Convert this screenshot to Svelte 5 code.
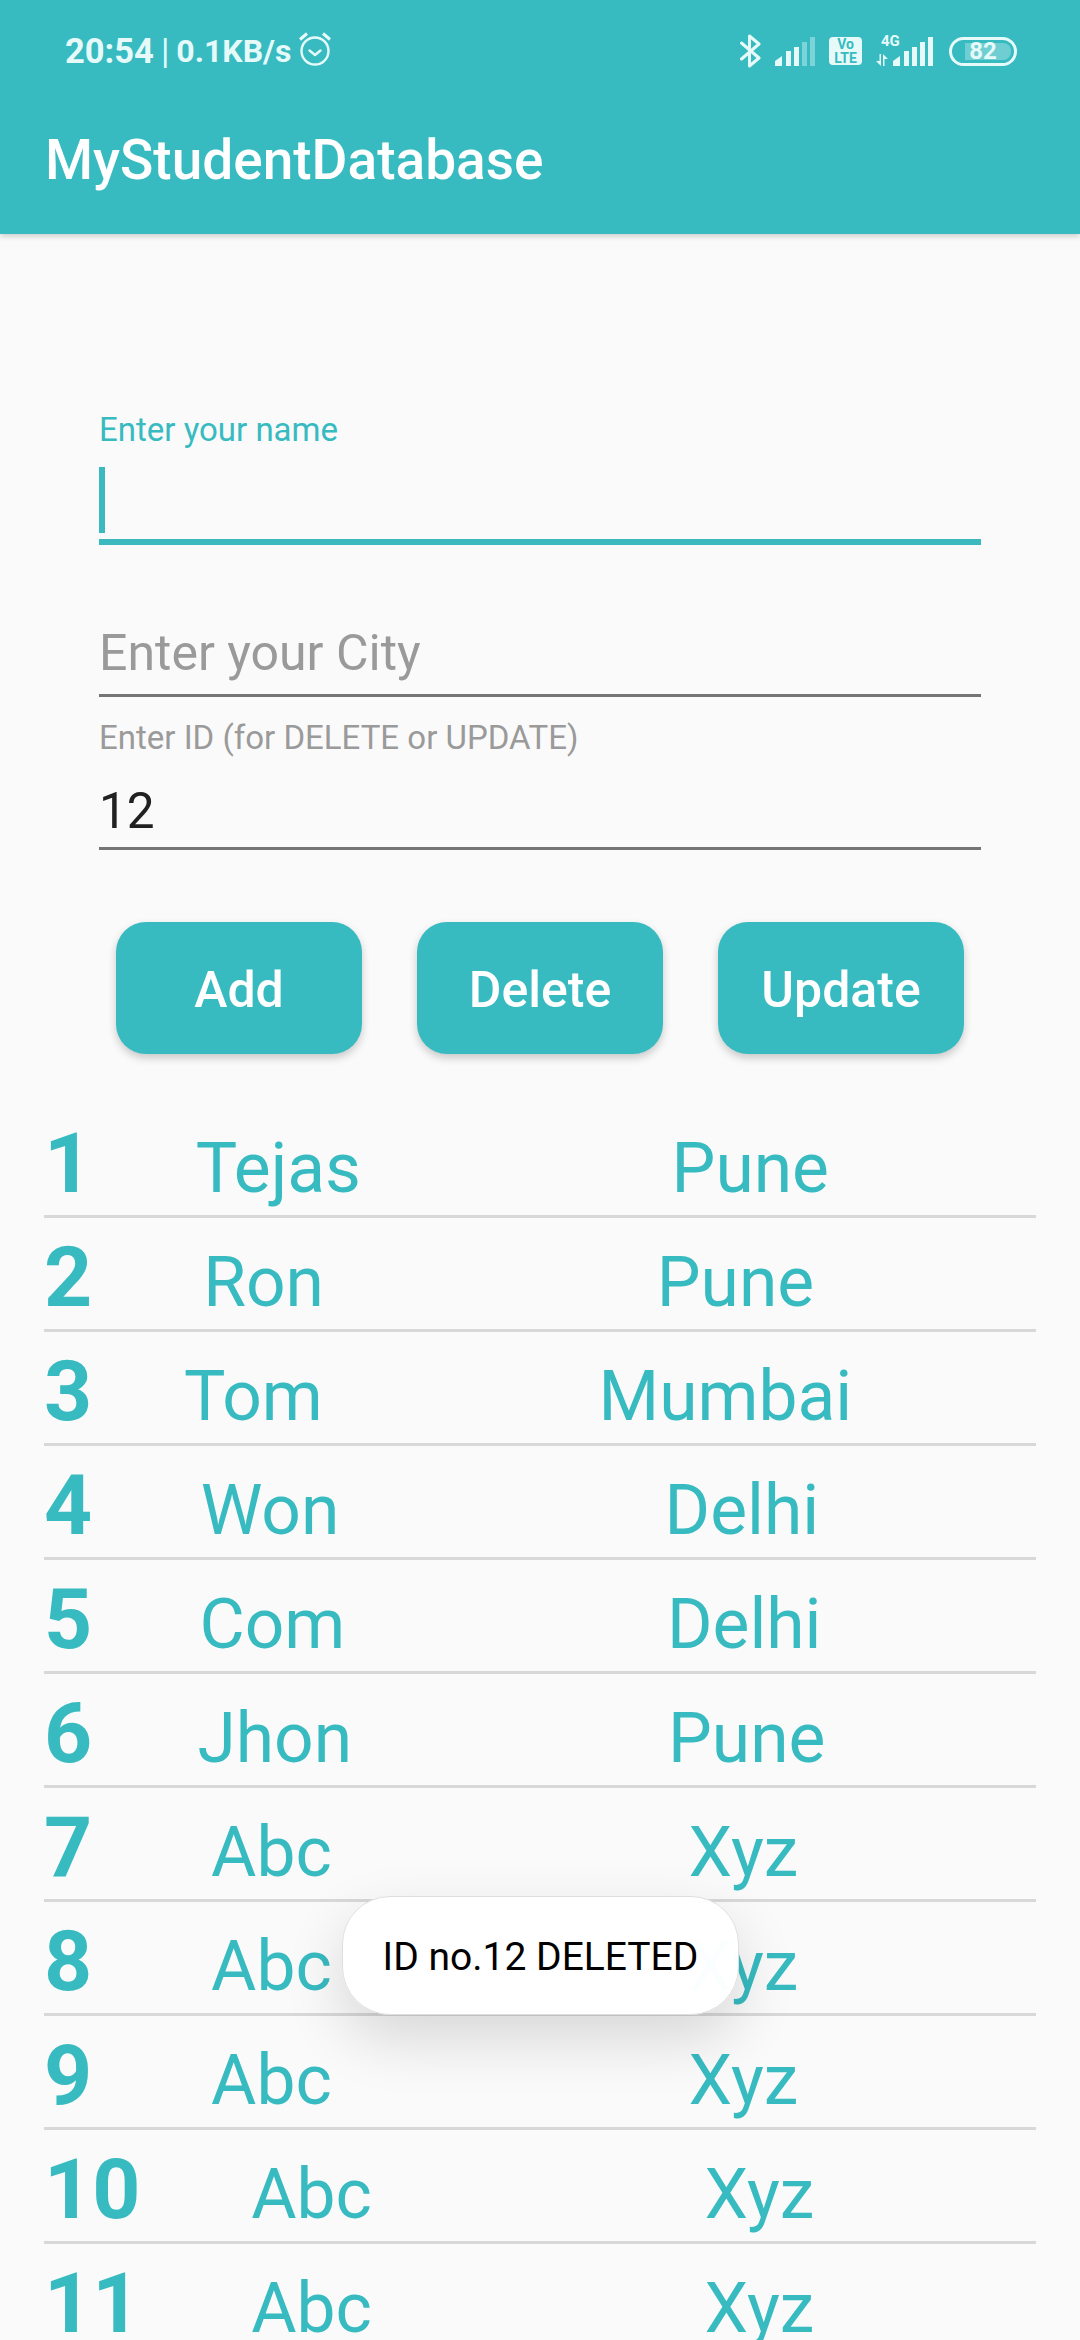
<script>
  const students = [
    { id: 1, name: 'Tejas', city: 'Pune' },
    { id: 2, name: 'Ron', city: 'Pune' },
    { id: 3, name: 'Tom', city: 'Mumbai' },
    { id: 4, name: 'Won', city: 'Delhi' },
    { id: 5, name: 'Com', city: 'Delhi' },
    { id: 6, name: 'Jhon', city: 'Pune' },
    { id: 7, name: 'Abc', city: 'Xyz' },
    { id: 8, name: 'Abc', city: 'Xyz' },
    { id: 9, name: 'Abc', city: 'Xyz' },
    { id: 10, name: 'Abc', city: 'Xyz' },
    { id: 11, name: 'Abc', city: 'Xyz' }
  ];
</script>

<div class="screen">
  <header class="appbar">
    <div class="status">
      <div class="status-left">
        <span class="time">20:54</span>
        <span class="sep">|</span>
        <span class="speed">0.1KB/s</span>
        <svg class="alarm" width="34" height="36" viewBox="0 0 34 36" fill="none" stroke="#e6fafa" stroke-width="2.4">
          <circle cx="17" cy="20" r="13.5" />
          <path d="M11.5 19.5 L17 24 L22.5 19.5" stroke-linecap="round" stroke-linejoin="round" />
          <path d="M2 8.5 L9 2.5 M32 8.5 L25 2.5" stroke-width="3" />
        </svg>
      </div>
      <div class="status-right">
        <svg width="21" height="34" viewBox="0 0 21 34" fill="none" stroke="#e6fafa" stroke-width="3" stroke-linejoin="round" stroke-linecap="round">
          <path d="M1.5 9 L19 24 L9.5 32 V2 L19 10 L1.5 25" />
        </svg>
        <svg class="bars" width="40" height="29" viewBox="0 0 40 29" fill="#e6fafa">
          <path d="M0 29 V24 L7 19 V29 Z" />
          <rect x="11" y="14" width="5" height="15" />
          <rect x="19" y="10" width="5" height="19" />
          <rect x="27" y="5" width="5" height="24" opacity="0.4" />
          <rect x="35" y="0" width="5" height="29" opacity="0.4" />
        </svg>
        <div class="volte"><span>Vo</span><span>LTE</span></div>
        <div class="net">
          <span class="fourg">4G</span>
          <svg width="12" height="12" viewBox="0 0 12 12" fill="#e6fafa">
            <path d="M3.5 0 H5 V12 L0 7 H3.5 Z M7 0 L12 5 H8.5 V12 H7 Z" />
          </svg>
        </div>
        <svg class="bars2" width="40" height="29" viewBox="0 0 40 29" fill="#e6fafa">
          <path d="M0 29 V24 L7 19 V29 Z" />
          <rect x="11" y="14" width="5" height="15" />
          <rect x="19" y="10" width="5" height="19" />
          <rect x="27" y="5" width="5" height="24" />
          <rect x="35" y="0" width="5" height="29" />
        </svg>
        <div class="battery"><div class="battery-fill"></div><span>82</span></div>
      </div>
    </div>
    <h1>MyStudentDatabase</h1>
  </header>

  <section class="form">
    <label class="label-focus" for="name">Enter your name</label>
    <div class="name-field" id="name"><span class="caret"></span></div>
    <input class="text city" type="text" placeholder="Enter your City" />
    <label class="label-id" for="sid">Enter ID (for DELETE or UPDATE)</label>
    <input class="text sid" id="sid" type="text" value="12" />
  </section>

  <div class="buttons">
    <button>Add</button>
    <button>Delete</button>
    <button>Update</button>
  </div>

  <div class="list">
    {#each students as s (s.id)}
      <div class="row">
        <span class="num">{s.id}</span>
        <span class="name">{s.name}</span>
        <span class="cityname">{s.city}</span>
      </div>
    {/each}
  </div>

  <div class="toast">ID no.12 DELETED</div>
</div>

<style>
  :global(body) {
    margin: 0;
    background: #fafafa;
  }

  .screen {
    position: relative;
    width: 1080px;
    height: 2340px;
    overflow: hidden;
    background: #fafafa;
    font-family: Roboto, sans-serif;
  }

  .appbar {
    height: 234px;
    box-sizing: border-box;
    background: #37bbc1;
    padding: 30px 0 0 45px;
    box-shadow: 0 2px 6px rgba(0, 0, 0, 0.2);
  }

  .status {
    display: flex;
    justify-content: space-between;
    align-items: center;
    height: 42px;
    padding: 0 63px 0 20px;
    color: #e6fafa;
  }

  .status-left {
    display: flex;
    align-items: center;
    gap: 7px;
    font-size: 34.5px;
    font-weight: 700;
  }

  .sep {
    font-weight: 400;
  }

  .speed {
    font-size: 32px;
  }

  .alarm {
    margin-top: -4px;
  }

  .status-right {
    display: flex;
    align-items: center;
    height: 36px;
  }

  .bars {
    margin-left: 14px;
  }

  .volte {
    margin-left: 14px;
    width: 33px;
    height: 28px;
    border-radius: 4px;
    background: #e6fafa;
    color: #37bbc1;
    display: flex;
    flex-direction: column;
    align-items: center;
    font-size: 14px;
    font-weight: 700;
    line-height: 14px;
  }

  .net {
    margin-left: 14px;
    width: 26px;
    height: 30px;
    display: flex;
    flex-direction: column;
    justify-content: space-between;
    align-items: flex-start;
  }

  .fourg {
    font-size: 15px;
    font-weight: 700;
    line-height: 11px;
    margin-left: 5px;
  }

  .bars2 {
    margin-left: -9px;
  }

  .battery {
    position: relative;
    margin-left: 16px;
    width: 68px;
    height: 29px;
    box-sizing: border-box;
    border: 3px solid #e6fafa;
    border-radius: 15px;
    display: flex;
    align-items: center;
    justify-content: center;
    font-size: 24px;
    font-weight: 700;
    color: #e6fafa;
  }

  .battery span {
    position: relative;
  }

  .battery-fill {
    position: absolute;
    left: 13px;
    top: 3px;
    bottom: 3px;
    right: 3px;
    border-radius: 0 8px 8px 0;
    background: rgba(255, 255, 255, 0.28);
  }

  h1 {
    margin: 56px 0 0;
    font-size: 55px;
    font-weight: 500;
    line-height: 64px;
    color: #fff;
  }

  .form {
    display: flex;
    flex-direction: column;
    padding: 178px 99px 0;
  }

  .label-focus {
    font-size: 33px;
    line-height: 36px;
    color: #37bbc1;
  }

  .name-field {
    height: 87px;
    margin-top: 10px;
    padding-top: 9px;
    box-sizing: border-box;
    border-bottom: 6px solid #3cb9bf;
  }

  .caret {
    display: block;
    width: 6px;
    height: 66px;
    background: #3cb9bf;
  }

  .text {
    display: block;
    width: 100%;
    box-sizing: border-box;
    padding: 0;
    border: 0;
    border-bottom: 3px solid #757575;
    background: transparent;
    outline: none;
    font-family: inherit;
    font-size: 49.5px;
    color: #212121;
  }

  .text::placeholder {
    color: #9a9a9a;
    opacity: 1;
  }

  .city {
    height: 85px;
    margin-top: 67px;
    font-size: 50px;
  }

  .label-id {
    margin-top: 23px;
    font-size: 33px;
    line-height: 36px;
    color: #9a9a9a;
  }

  .sid {
    height: 75px;
    margin-top: 19px;
  }

  .buttons {
    display: flex;
    justify-content: space-between;
    padding: 72px 116px 0;
  }

  button {
    width: 246px;
    height: 132px;
    border: 0;
    padding: 3px 0 0;
    border-radius: 30px;
    background: #37bbc1;
    color: #fff;
    font-family: inherit;
    font-size: 50px;
    font-weight: 500;
    box-shadow: 0 4px 8px rgba(0, 0, 0, 0.2);
  }

  .list {
    margin: 50px 44px 0;
  }

  .row {
    display: flex;
    align-items: center;
    height: 114px;
    box-sizing: border-box;
    padding-top: 18px;
    border-bottom: 3px solid #d8d8d8;
    color: #37bbc1;
  }

  .num {
    font-size: 84px;
    font-weight: 700;
    line-height: 100px;
    margin-top: -10px;
  }

  .name {
    flex: 1 1 auto;
    text-align: center;
    font-size: 69.5px;
  }

  .cityname {
    flex: 2 1 auto;
    text-align: center;
    font-size: 69.5px;
  }

  .toast {
    position: absolute;
    left: 342px;
    top: 1896px;
    width: 397px;
    height: 119px;
    box-sizing: border-box;
    display: flex;
    align-items: center;
    justify-content: center;
    padding-top: 3px;
    border: 1px solid #dedede;
    border-radius: 48px;
    background: rgba(255, 255, 255, 0.98);
    color: #000;
    font-size: 39px;
    box-shadow: 0 24px 60px rgba(0, 0, 0, 0.14);
  }
</style>
